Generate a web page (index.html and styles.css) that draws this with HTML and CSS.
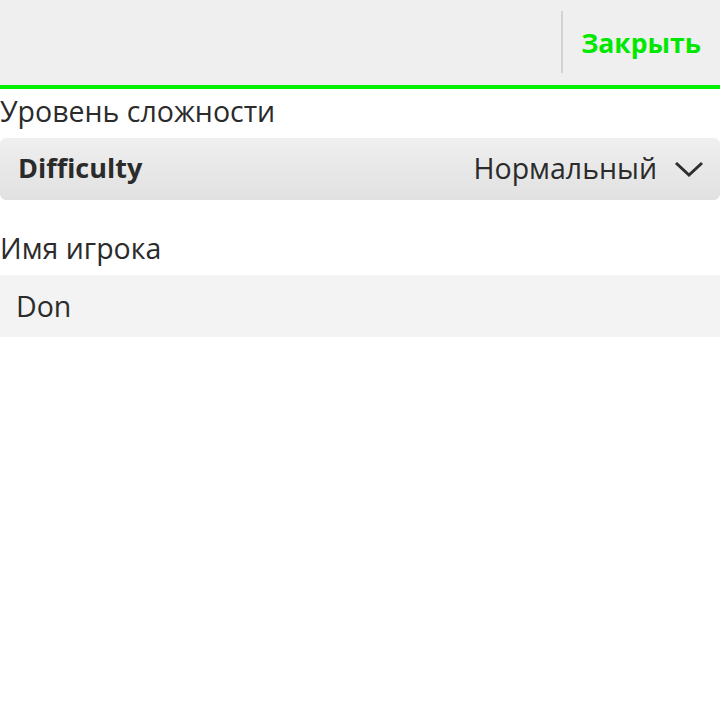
FILE: index.html
```html
<!DOCTYPE html>
<html lang="ru">
<head>
<meta charset="utf-8">
<link rel="stylesheet" href="styles.css">
</head>
<body>
<header class="titlebar">
  <div class="spacer"></div>
  <div class="divider"></div>
  <button class="close">Закрыть</button>
</header>
<main class="content">
  <div class="label">Уровень сложности</div>
  <div class="dropdown">
    <span class="dd-title">Difficulty</span>
    <span class="dd-value">Нормальный</span>
    <svg class="chevron" width="30" height="18" viewBox="0 0 30 18"><path d="M2 3 L15 15 L28 3" fill="none" stroke="#2f2f2f" stroke-width="3"/></svg>
  </div>
  <div class="label label2">Имя игрока</div>
  <div class="field">Don</div>
</main>
</body>
</html>
```
FILE: styles.css
```css
* { box-sizing: border-box; }
html, body { margin: 0; padding: 0; background: #fff; }
body { font-family: "Open Sans", "DejaVu Sans", sans-serif; color: #2b2b2b; width: 720px; height: 720px; }
.titlebar {
  height: 89px;
  background: #efefef;
  border-bottom: 4px solid #00f000;
  display: flex;
  align-items: center;
}
.spacer { flex: 1; }
.divider { width: 2px; height: 62px; background: #d4d4d4; margin-top: -1px; }
.close {
  border: 0; background: none; padding: 0 19px 0 18px;
  font-family: inherit; font-size: 26.5px; font-weight: 700; color: #00e800;
  margin-top: 0;
}
.label { font-size: 28.5px; line-height: 45px; height: 49px; padding-bottom: 4px; }
.dropdown {
  height: 62px;
  border-radius: 6px;
  background: linear-gradient(#efefef, #e1e1e1);
  display: flex; align-items: center;
  padding: 0 16px 3px 18px;
  font-size: 28.5px;
}
.dd-title { font-weight: 700; flex: 1; font-size: 27px; }
.dd-value { margin-right: 17px; }
.chevron { display: block; margin-top: 2px; }
.label2 { margin-top: 26px; }
.field { height: 62px; background: #f3f3f3; font-size: 28.5px; display: flex; align-items: center; padding-left: 16px; }
```
